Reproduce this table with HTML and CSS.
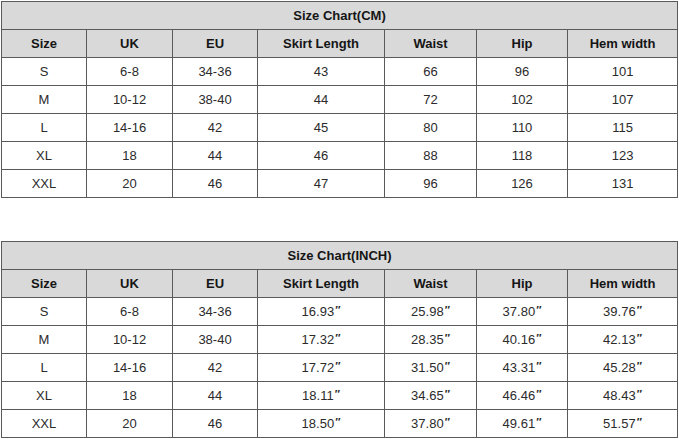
FILE: index.html
```html
<!DOCTYPE html>
<html>
<head>
<meta charset="utf-8">
<link rel="stylesheet" href="styles.css">
</head>
<body>
<div class="page">
<table class="chart">
  <colgroup>
    <col class="c-size"><col class="c-uk"><col class="c-eu"><col class="c-skirt"><col class="c-waist"><col class="c-hip"><col class="c-hem">
  </colgroup>
  <tr class="title"><th colspan="7">Size Chart(CM)</th></tr>
  <tr class="head"><th>Size</th><th>UK</th><th>EU</th><th>Skirt Length</th><th>Waist</th><th>Hip</th><th>Hem width</th></tr>
  <tr><td>S</td><td>6-8</td><td>34-36</td><td>43</td><td>66</td><td>96</td><td>101</td></tr>
  <tr><td>M</td><td>10-12</td><td>38-40</td><td>44</td><td>72</td><td>102</td><td>107</td></tr>
  <tr><td>L</td><td>14-16</td><td>42</td><td>45</td><td>80</td><td>110</td><td>115</td></tr>
  <tr><td>XL</td><td>18</td><td>44</td><td>46</td><td>88</td><td>118</td><td>123</td></tr>
  <tr><td>XXL</td><td>20</td><td>46</td><td>47</td><td>96</td><td>126</td><td>131</td></tr>
</table>
<table class="chart">
  <colgroup>
    <col class="c-size"><col class="c-uk"><col class="c-eu"><col class="c-skirt"><col class="c-waist"><col class="c-hip"><col class="c-hem">
  </colgroup>
  <tr class="title"><th colspan="7">Size Chart(INCH)</th></tr>
  <tr class="head"><th>Size</th><th>UK</th><th>EU</th><th>Skirt Length</th><th>Waist</th><th>Hip</th><th>Hem width</th></tr>
  <tr><td>S</td><td>6-8</td><td>34-36</td><td>16.93<span class="in">″</span></td><td>25.98<span class="in">″</span></td><td>37.80<span class="in">″</span></td><td>39.76<span class="in">″</span></td></tr>
  <tr><td>M</td><td>10-12</td><td>38-40</td><td>17.32<span class="in">″</span></td><td>28.35<span class="in">″</span></td><td>40.16<span class="in">″</span></td><td>42.13<span class="in">″</span></td></tr>
  <tr><td>L</td><td>14-16</td><td>42</td><td>17.72<span class="in">″</span></td><td>31.50<span class="in">″</span></td><td>43.31<span class="in">″</span></td><td>45.28<span class="in">″</span></td></tr>
  <tr><td>XL</td><td>18</td><td>44</td><td>18.11<span class="in">″</span></td><td>34.65<span class="in">″</span></td><td>46.46<span class="in">″</span></td><td>48.43<span class="in">″</span></td></tr>
  <tr><td>XXL</td><td>20</td><td>46</td><td>18.50<span class="in">″</span></td><td>37.80<span class="in">″</span></td><td>49.61<span class="in">″</span></td><td>51.57<span class="in">″</span></td></tr>
</table>
</div>
</body>
</html>
```
FILE: styles.css
```css
html, body {
  margin: 0;
  padding: 0;
  background: #ffffff;
}
.page {
  padding: 1px 0 0 1px;
  display: flex;
  flex-direction: column;
  gap: 43px;
}
.chart {
  border-collapse: collapse;
  table-layout: fixed;
  width: 676px;
  font-family: "Liberation Sans", Arial, sans-serif;
  font-size: 13px;
  color: #2b2b2b;
}
.c-size { width: 85px; }
.c-uk { width: 86px; }
.c-eu { width: 85px; }
.c-skirt { width: 127px; }
.c-waist { width: 92px; }
.c-hip { width: 91px; }
.c-hem { width: 110px; }
.chart th, .chart td {
  border: 1px solid #5a5a5a;
  height: 27px;
  padding: 0;
  text-align: center;
  vertical-align: middle;
}
.chart th {
  background: #d9d9d9;
  color: #151515;
  font-weight: bold;
}
.in {
  font-size: 11px;
  font-weight: bold;
  vertical-align: 2px;
  margin-left: 1px;
}
```
